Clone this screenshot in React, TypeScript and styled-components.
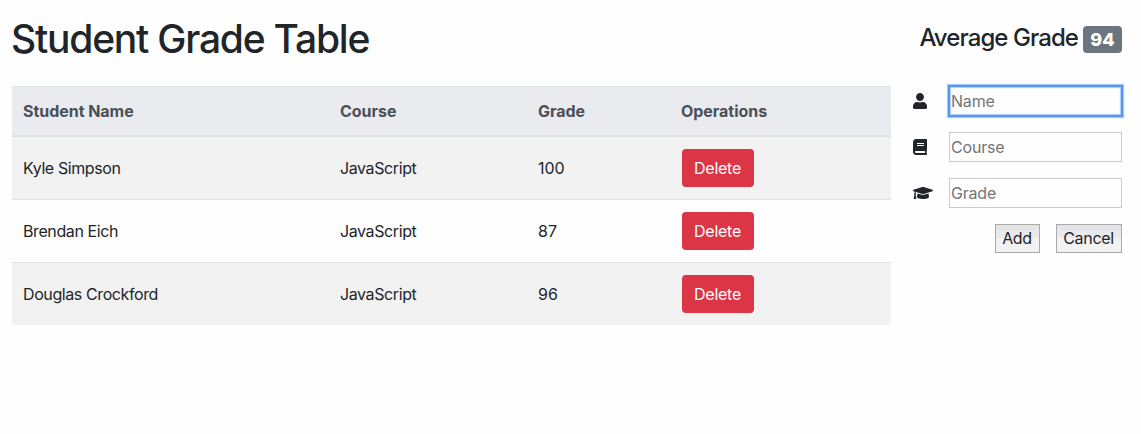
import React from "react";
import styled, { createGlobalStyle } from "styled-components";
import { FaUser, FaBook, FaGraduationCap } from "react-icons/fa";

const GlobalStyle = createGlobalStyle`
  *, *::before, *::after { box-sizing: border-box; }
  body {
    margin: 0;
    background: #fefefe;
    color: #212529;
    font-family: Inter, Roboto, "Liberation Sans", sans-serif;
    font-size: 16px;
    line-height: 24px;
    letter-spacing: -0.4px;
  }
`;

const Page = styled.div`
  display: grid;
  grid-template-columns: 879px 209px;
  column-gap: 22px;
  padding: 0 0 0 12px;
`;

const Header = styled.header<{ $end?: boolean }>`
  display: flex;
  align-items: center;
  justify-content: ${(p) => (p.$end ? "flex-end" : "flex-start")};
  gap: 5px;
  height: 86px;
  padding-bottom: 8px;
`;

const Title = styled.h1`
  margin: 0 0 0 -1px;
  font-size: 39px;
  font-weight: 500;
  line-height: 48px;
  letter-spacing: -1.22px;
`;

const Average = styled.h2`
  margin: 0;
  padding-bottom: 3px;
  font-size: 24px;
  font-weight: 500;
  line-height: 29px;
  letter-spacing: -0.93px;
`;

const Badge = styled.span`
  display: flex;
  align-items: center;
  justify-content: center;
  width: 39px;
  height: 27px;
  padding-top: 2px;
  border-radius: 4px;
  background: #6c757d;
  color: #fff;
  font-size: 18px;
  font-weight: 800;
  letter-spacing: 0;
`;

const Table = styled.table`
  width: 879px;
  table-layout: fixed;
  border-collapse: separate;
  border-spacing: 0;
`;

const HeadCell = styled.th<{ $width: number }>`
  width: ${(p) => p.$width}px;
  height: 51px;
  padding: 0 11px;
  border-top: 1px solid #dee2e6;
  border-bottom: 2px solid #dcdfe6;
  background: #e9ebef;
  color: #495057;
  font-weight: 700;
  letter-spacing: -0.04px;
  text-align: left;
`;

const Cell = styled.td<{ $numeric?: boolean }>`
  padding: 12px 11px;
  letter-spacing: ${(p) => (p.$numeric ? "0" : "inherit")};
  vertical-align: middle;
`;

const Row = styled.tr`
  &:nth-child(odd) { background: #f2f2f2; }
  & + & ${Cell} { border-top: 1px solid #dee2e6; }
`;

const DeleteButton = styled.button`
  display: block;
  width: 72px;
  height: 38px;
  margin-left: 1px;
  padding: 0 1px 0 0;
  border: 0;
  border-radius: 4px;
  background: #dc3545;
  color: #fff;
  font: inherit;
  letter-spacing: -0.25px;
`;

const Form = styled.form`
  display: flex;
  flex-direction: column;
  gap: 16px;
`;

const Field = styled.label`
  display: flex;
  align-items: center;
  height: 30px;
`;

const IconSlot = styled.span<{ $width: number }>`
  display: flex;
  align-items: center;
  width: 36px;
  svg {
    width: ${(p) => p.$width}px;
    height: 16px;
  }
`;

const Input = styled.input<{ $focused?: boolean }>`
  width: 173px;
  height: 30px;
  padding: 1px;
  border: 1px solid ${(p) => (p.$focused ? "#5b97f0" : "#cbcbcb")};
  border-radius: 0;
  outline: none;
  background: #fefefe;
  box-shadow: ${(p) =>
    p.$focused
      ? "0 0 0 1px #5594f4, 0 0 1px 2px #a9cbfb, inset 0 0 1px 1px #a9cbfb"
      : "none"};
  font: inherit;
  letter-spacing: -0.2px;
  &::placeholder { color: #757575; opacity: 1; }
`;

const Actions = styled.div`
  display: flex;
  justify-content: flex-end;
  gap: 16px;
`;

const ActionButton = styled.button<{ $width: number }>`
  width: ${(p) => p.$width}px;
  height: 29px;
  padding: 0 1px 2px 0;
  border: 1px solid #a9a9a9;
  border-radius: 0;
  background: linear-gradient(#e3e4e4 0 5px, #e8e9ed 5px 13px, #f2f2f2 13px);
  color: #212529;
  font: inherit;
  letter-spacing: -0.3px;
`;

const columns = [
  { label: "Student Name", width: 317 },
  { label: "Course", width: 198 },
  { label: "Grade", width: 143 },
  { label: "Operations", width: 221 },
];

const students = [
  { name: "Kyle Simpson", course: "JavaScript", grade: 100 },
  { name: "Brendan Eich", course: "JavaScript", grade: 87 },
  { name: "Douglas Crockford", course: "JavaScript", grade: 96 },
];

export default function App() {
  return (
    <>
      <GlobalStyle />
      <Page>
        <Header><Title>Student Grade Table</Title></Header>
        <Header $end>
          <Average>Average Grade</Average>
          <Badge>94</Badge>
        </Header>
        <Table>
          <thead>
            <tr>
              {columns.map((c) => (
                <HeadCell key={c.label} $width={c.width}>{c.label}</HeadCell>
              ))}
            </tr>
          </thead>
          <tbody>
            {students.map((s) => (
              <Row key={s.name}>
                <Cell>{s.name}</Cell>
                <Cell>{s.course}</Cell>
                <Cell $numeric>{s.grade}</Cell>
                <Cell><DeleteButton>Delete</DeleteButton></Cell>
              </Row>
            ))}
          </tbody>
        </Table>
        <Form onSubmit={(e) => e.preventDefault()}>
          <Field>
            <IconSlot $width={14}><FaUser /></IconSlot>
            <Input placeholder="Name" $focused />
          </Field>
          <Field>
            <IconSlot $width={14}><FaBook /></IconSlot>
            <Input placeholder="Course" />
          </Field>
          <Field>
            <IconSlot $width={20}><FaGraduationCap /></IconSlot>
            <Input placeholder="Grade" />
          </Field>
          <Actions>
            <ActionButton $width={45}>Add</ActionButton>
            <ActionButton $width={66}>Cancel</ActionButton>
          </Actions>
        </Form>
      </Page>
    </>
  );
}
